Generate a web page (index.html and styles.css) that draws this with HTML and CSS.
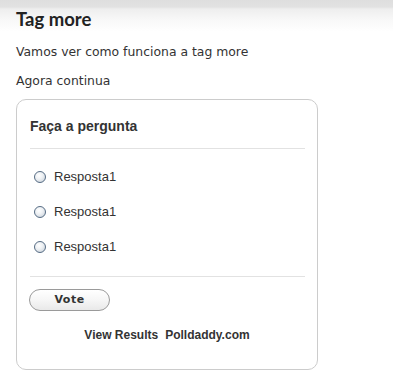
FILE: index.html
```html
<!DOCTYPE html>
<html>
<head>
<meta charset="utf-8">
<link rel="stylesheet" href="styles.css">
</head>
<body>
<div class="page">
  <h2 class="title">Tag more</h2>
  <p class="text first">Vamos ver como funciona a tag more</p>
  <p class="text">Agora continua</p>
  <div class="poll">
    <div class="question">Faça a pergunta</div>
    <div class="rule"></div>
    <ul class="answers">
      <li class="answer"><span class="radio"></span><span class="label">Resposta1</span></li>
      <li class="answer"><span class="radio"></span><span class="label">Resposta1</span></li>
      <li class="answer"><span class="radio"></span><span class="label">Resposta1</span></li>
    </ul>
    <div class="rule"></div>
    <div class="actions"><button class="vote">Vote</button></div>
    <div class="footer"><span>View Results</span><span>Polldaddy.com</span></div>
  </div>
</div>
</body>
</html>
```
FILE: styles.css
```css
html, body {
  margin: 0;
  padding: 0;
}
body {
  background: linear-gradient(to bottom, #dedede 0, #e2e2e2 7px, #eeeeee 9px, #f8f8f8 20px, #ffffff 32px) no-repeat;
  background-color: #fff;
  min-height: 388px;
}
.page {
  padding: 8px 0 0 16px;
}
.title {
  margin: 0;
  font-family: Lato, "Liberation Sans", sans-serif;
  font-weight: 700;
  font-size: 18.5px;
  line-height: 22px;
  color: #222;
}
.text {
  margin: 11px 0 0;
  font-family: "DejaVu Sans", Verdana, sans-serif;
  font-size: 12.4px;
  line-height: 18px;
  color: #333;
}
.text.first {
  margin-top: 13px;
}
.poll {
  margin-top: 9px;
  border: 1px solid #cccccc;
  border-radius: 10px;
  padding: 17px 12px 0 13px;
  box-sizing: border-box;
  width: 302px;
  height: 271px;
  font-family: "Liberation Sans", Arial, sans-serif;
  color: #333;
}
.question {
  font-weight: 700;
  font-size: 14px;
  line-height: 18px;
  color: #333;
}
.rule {
  height: 1px;
  background: #e2e2e2;
  margin-top: 13px;
}
.answers {
  list-style: none;
  margin: 10px 0 0;
  padding: 0;
}
.answers + .rule {
  margin-top: 12px;
}
.answer {
  display: flex;
  align-items: center;
  height: 35px;
  font-size: 13px;
}
.radio {
  width: 10px;
  height: 10px;
  margin-left: 4px;
  margin-right: 8px;
  border: 1px solid #566c84;
  border-radius: 50%;
  background: radial-gradient(circle at 40% 35%, #ffffff 0, #eef1f4 40%, #c3ccd6 100%);
}
.label {
  color: #333;
}
.actions {
  margin-top: 12px;
  display: flex;
}
.vote {
  width: 81px;
  height: 22px;
  margin-left: -1px;
  border: 1px solid #9a9a9a;
  border-radius: 11px;
  background: linear-gradient(to bottom, #ffffff 0, #f6f6f6 50%, #e9e9e9 100%);
  font-family: "DejaVu Sans", Verdana, sans-serif;
  font-weight: 700;
  font-size: 11px;
  letter-spacing: 0.5px;
  color: #333;
  padding: 0;
  line-height: 20px;
}
.footer {
  margin-top: 16px;
  display: flex;
  justify-content: center;
  gap: 7px;
  margin-left: -13px;
  margin-right: -12px;
  font-weight: 700;
  font-size: 12px;
  line-height: 16px;
  color: #333;
}
```
